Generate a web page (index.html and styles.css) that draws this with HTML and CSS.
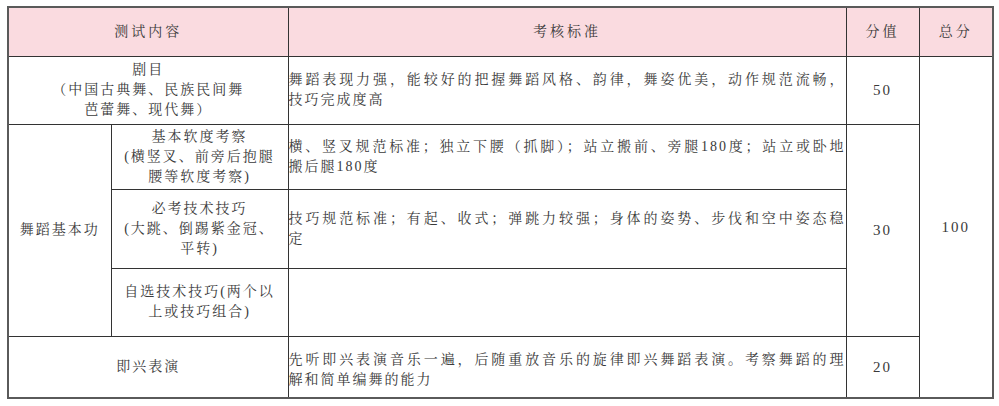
FILE: index.html
```html
<!DOCTYPE html>
<html lang="zh-CN">
<head>
<meta charset="utf-8">
<title>舞蹈考核标准</title>
<link rel="stylesheet" href="styles.css">
</head>
<body>
<table class="grid">
  <colgroup>
    <col class="c-a">
    <col class="c-b">
    <col class="c-c">
    <col class="c-d">
    <col class="c-e">
  </colgroup>
  <thead>
    <tr class="r-head">
      <th colspan="2">测试内容</th>
      <th>考核标准</th>
      <th>分值</th>
      <th>总分</th>
    </tr>
  </thead>
  <tbody>
    <tr class="r-1">
      <td colspan="2" class="center">剧目<br>（中国古典舞、民族民间舞<br>芭蕾舞、现代舞）</td>
      <td class="desc"><span class="full">舞蹈表现力强，能较好的把握舞蹈风格、韵律，舞姿优美，动作规范流畅，</span><span class="last">技巧完成度高</span></td>
      <td class="num">50</td>
      <td class="num total" rowspan="5">100</td>
    </tr>
    <tr class="r-2">
      <td rowspan="3" class="center">舞蹈基本功</td>
      <td class="center">基本软度考察<br>(横竖叉、前旁后抱腿<br>腰等软度考察)</td>
      <td class="desc"><span class="full">横、竖叉规范标准；独立下腰（抓脚）；站立搬前、旁腿180度；站立或卧地</span><span class="last">搬后腿180度</span></td>
      <td class="num" rowspan="3">30</td>
    </tr>
    <tr class="r-3">
      <td class="center">必考技术技巧<br>(大跳、倒踢紫金冠、<br>平转)</td>
      <td class="desc"><span class="full">技巧规范标准；有起、收式；弹跳力较强；身体的姿势、步伐和空中姿态稳</span><span class="last">定</span></td>
    </tr>
    <tr class="r-4">
      <td class="center">自选技术技巧(两个以<br>上或技巧组合)</td>
      <td class="desc"></td>
    </tr>
    <tr class="r-5">
      <td colspan="2" class="center">即兴表演</td>
      <td class="desc"><span class="full">先听即兴表演音乐一遍，后随重放音乐的旋律即兴舞蹈表演。考察舞蹈的理</span><span class="last">解和简单编舞的能力</span></td>
      <td class="num">20</td>
    </tr>
  </tbody>
</table>
</body>
</html>
```

FILE: styles.css
```css
html, body {
  margin: 0;
  padding: 0;
  background: #ffffff;
}

body {
  padding: 6px 0 0 7px;
  font-family: "Liberation Serif", "Noto Serif CJK SC", "Noto Sans CJK SC", serif;
  font-size: 14px;
  line-height: 20px;
  color: #3a3a3a;
}

.grid {
  border-collapse: collapse;
  table-layout: fixed;
  width: 985px;
  border: 2px solid #5a5a5a;
}

.c-a { width: 103px; }
.c-b { width: 177px; }
.c-c { width: 558px; }
.c-d { width: 73px; }
.c-e { width: 74px; }

.grid th,
.grid td {
  border: 1px solid #333333;
  padding: 0;
  vertical-align: middle;
  letter-spacing: 2px;
}

.grid th {
  background: #fadbe0;
  font-weight: normal;
  text-align: center;
  letter-spacing: 3px;
}

.r-head { height: 49px; }
.r-1 { height: 68px; }
.r-2 { height: 65px; }
.r-3 { height: 79px; }
.r-4 { height: 68px; }
.r-5 { height: 62px; }

.center {
  text-align: center;
}

.desc {
  padding: 0 7px 0 3px;
  letter-spacing: 0;
}

.desc .full,
.desc .last {
  display: block;
  white-space: nowrap;
}

.desc .full {
  text-align: justify;
  text-align-last: justify;
}

.num {
  text-align: center;
  font-size: 15px;
  letter-spacing: 0;
}

.r-5 .desc {
  padding-top: 6px;
}
```
